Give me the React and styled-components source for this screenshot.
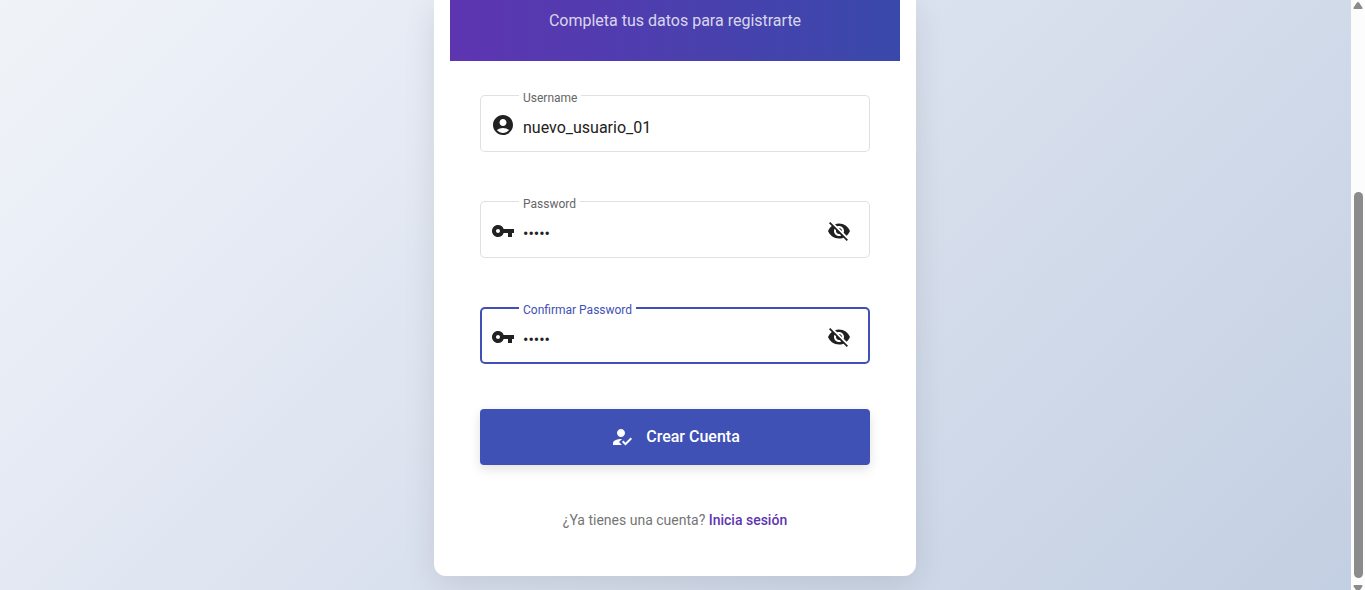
import React from "react";
import styled, { createGlobalStyle } from "styled-components";
import { MdAccountCircle, MdVpnKey, MdVisibilityOff, MdHowToReg } from "react-icons/md";

const GlobalStyle = createGlobalStyle`
  *, *::before, *::after { box-sizing: border-box; }
  body { margin: 0; font-family: Roboto, "Liberation Sans", sans-serif; color: #212121; }
`;

const Shell = styled.div`
  display: flex;
  align-items: stretch;
  height: 100vh;
  overflow: hidden;
`;

const Page = styled.main`
  flex: 1;
  min-width: 0;
  display: flex;
  justify-content: center;
  align-items: flex-start;
  padding: 0 17px 14px 16px;
  background: linear-gradient(135deg, #f0f4f8 0%, #e9edf6 18%, #c3cfe2 100%);
`;

const Card = styled.section`
  width: 100%;
  max-width: 482px;
  padding: 0 16px 16px;
  background: #fff;
  border-radius: 0 0 12px 12px;
  box-shadow: 0 8px 32px rgba(0, 0, 0, 0.1);
`;

const Banner = styled.header`
  padding: 9px 16px 28px;
  background: linear-gradient(90deg, #5e35b1, #3949ab);
  text-align: center;
`;

const Subtitle = styled.p`
  margin: 0;
  font-size: 16px;
  line-height: 24px;
  color: rgba(255, 255, 255, 0.8);
`;

const Form = styled.form`
  display: flex;
  flex-direction: column;
  padding: 34px 30px 0;
`;

const Field = styled.div`
  position: relative;
  display: flex;
  align-items: center;
  height: 57px;
  margin-bottom: 49px;
  padding: 3px 19px 0 11px;
  border-radius: 5px;
  box-shadow: inset 0 0 0 ${(p) => (p.$focused ? "2px #3f51b5" : "1px #e0e0e0")};

  svg { flex: none; width: 24px; height: 24px; }
`;

const Label = styled.label`
  position: absolute;
  top: -5px;
  left: 39px;
  padding: 0 4px;
  background: #fff;
  font-size: 12px;
  line-height: 16px;
  color: ${(p) => (p.$focused ? "#3f51b5" : "#666")};
`;

const TextInput = styled.input`
  flex: 1;
  min-width: 0;
  margin: 0;
  padding: 6px 0 0 8px;
  border: 0;
  outline: 0;
  background: transparent;
  color: #212121;
  font: 400 16px/24px Roboto, "Liberation Sans", sans-serif;
`;

const IconButton = styled.button`
  display: flex;
  padding: 0;
  border: 0;
  background: none;
  color: inherit;
  cursor: pointer;
`;

const Submit = styled.button`
  display: flex;
  align-items: center;
  justify-content: center;
  gap: 12px;
  height: 56px;
  margin-top: -4px;
  border: 0;
  border-radius: 4px;
  background: #3f51b5;
  box-shadow: 0 4px 12px rgba(0, 0, 0, 0.12);
  color: #fff;
  font: 500 16px/24px Roboto, "Liberation Sans", sans-serif;
  cursor: pointer;

  svg { width: 24px; height: 24px; }
`;

const Footer = styled.p`
  margin: 45px 0 30px;
  text-align: center;
  font-size: 14px;
  line-height: 20px;
  color: #757575;
`;

const LoginLink = styled.a`
  color: #5e35b1;
  font-weight: 500;
  text-decoration: none;
`;

const ScrollTrack = styled.div`
  flex: none;
  width: 14px;
  display: flex;
  flex-direction: column;
  align-items: center;
  padding-top: 2px;
  background: #fcfcfc;

  svg { flex: none; display: block; }
`;

const ScrollThumb = styled.div`
  flex: 386;
  width: 9px;
  border-radius: 5px;
  background: #8b8b8b;
`;

const ScrollSpace = styled.div`
  flex: ${(p) => p.$grow};
`;

function FormField({ id, label, icon, type, value, focused }) {
  return (
    <Field $focused={focused}>
      <Label htmlFor={id} $focused={focused}>{label}</Label>
      {icon}
      <TextInput id={id} type={type} defaultValue={value} />
      {type === "password" && (
        <IconButton type="button" aria-label="Mostrar contraseña">
          <MdVisibilityOff />
        </IconButton>
      )}
    </Field>
  );
}

export default function App() {
  return (
    <>
      <GlobalStyle />
      <Shell>
        <Page>
          <Card>
            <Banner>
              <Subtitle>Completa tus datos para registrarte</Subtitle>
            </Banner>
            <Form>
              <FormField id="username" label="Username" icon={<MdAccountCircle />} type="text" value="nuevo_usuario_01" />
              <FormField id="password" label="Password" icon={<MdVpnKey />} type="password" value="12345" />
              <FormField id="confirm" label="Confirmar Password" icon={<MdVpnKey />} type="password" value="12345" focused />
              <Submit type="button">
                <MdHowToReg />
                Crear Cuenta
              </Submit>
            </Form>
            <Footer>
              ¿Ya tienes una cuenta? <LoginLink href="#login">Inicia sesión</LoginLink>
            </Footer>
          </Card>
        </Page>
        <ScrollTrack aria-hidden="true">
          <svg width="10" height="7" viewBox="0 0 10 7">
            <path d="M5 0Q5.7 0 6.2.8L9.4 5.4Q10 7 8.6 7H1.4Q0 7 .6 5.4L3.8.8Q4.3 0 5 0Z" fill="#8b8b8b" />
          </svg>
          <ScrollSpace $grow={183} />
          <ScrollThumb />
          <ScrollSpace $grow={7} />
          <svg width="10" height="5" viewBox="0 0 10 5">
            <path d="M1.4 0H8.6Q10 0 9.4 1.6L7 5H3L.6 1.6Q0 0 1.4 0Z" fill="#8b8b8b" />
          </svg>
        </ScrollTrack>
      </Shell>
    </>
  );
}
